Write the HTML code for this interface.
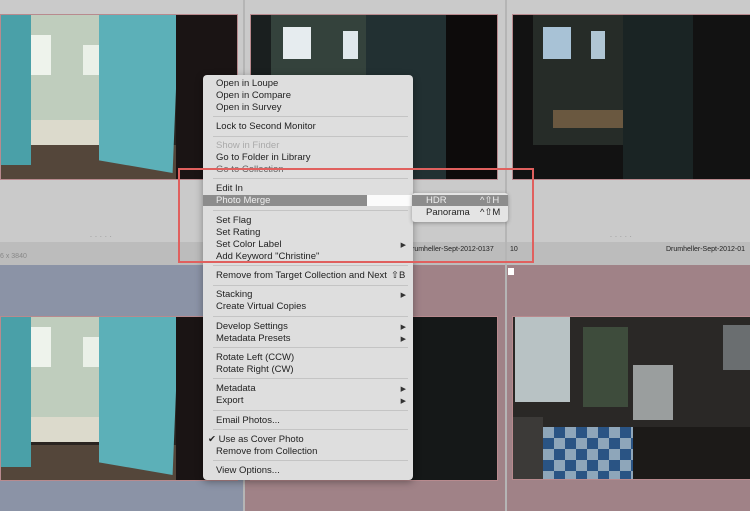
<!DOCTYPE html><html><head><style>
*{margin:0;padding:0;box-sizing:border-box}
body{width:750px;height:511px;overflow:hidden;position:relative;background:#cacaca;font-family:"Liberation Sans",sans-serif}
.a{position:absolute}
.img{position:absolute;overflow:hidden;border:1px solid #b88a8e}
.mi{position:absolute;left:13px;font-size:9.5px;color:#222;line-height:12px;white-space:nowrap}
.sep{position:absolute;left:10px;width:195px;height:1px;background:#c4c4c4}
.arr{position:absolute;right:7px;font-size:7px;color:#333}
</style></head><body>
<div class="a" style="left:243px;top:0;width:2px;height:511px;background:#b5b5b5"></div>
<div class="a" style="left:505px;top:0;width:2px;height:511px;background:#b5b5b5"></div>
<div class="a" style="left:0;top:242px;width:243px;height:23px;background:#bcbcbc"></div>
<div class="a" style="left:245px;top:242px;width:260px;height:23px;background:#bcbcbc"></div>
<div class="a" style="left:507px;top:242px;width:243px;height:23px;background:#bcbcbc"></div>
<div class="a" style="left:0;top:253px;font-size:7px;color:#888">6 x 3840</div>
<div class="a" style="left:412px;top:246px;font-size:7px;color:#222">rumheller-Sept-2012-0137</div>
<div class="a" style="left:510px;top:246px;font-size:7px;color:#222">10</div>
<div class="a" style="left:666px;top:246px;font-size:7px;color:#222">Drumheller-Sept-2012-01</div>
<div class="a" style="left:90px;top:232px;font-size:7px;color:#888;letter-spacing:3px">.....</div>
<div class="a" style="left:610px;top:232px;font-size:7px;color:#888;letter-spacing:3px">.....</div>
<div class="a" style="left:0;top:265px;width:243px;height:246px;background:#8b93a6"></div>
<div class="a" style="left:245px;top:265px;width:260px;height:246px;background:#a08287"></div>
<div class="a" style="left:507px;top:265px;width:243px;height:246px;background:#a08287"></div>
<div class="a" style="left:508px;top:268px;width:6px;height:7px;background:#fff"></div>

<div class="img" style="left:0;top:14px;width:238px;height:166px;background:#2a2420">
 <div class="a" style="left:20px;top:0;width:80px;height:110px;background:#bfcdbd"></div>
 <div class="a" style="left:22px;top:20px;width:28px;height:40px;background:#eef3ec"></div>
 <div class="a" style="left:82px;top:30px;width:16px;height:30px;background:#eaf0e8"></div>
 <div class="a" style="left:25px;top:105px;width:75px;height:25px;background:#dcdacc"></div>
 <div class="a" style="left:0;top:130px;width:238px;height:36px;background:#54463a"></div>
 <div class="a" style="left:0;top:0;width:30px;height:150px;background:#4aa0a8"></div>
 <div class="a" style="left:98px;top:0;width:80px;height:158px;background:#5cb0b8;clip-path:polygon(0 0,100% 0,92% 100%,0 92%)"></div>
 <div class="a" style="left:175px;top:0;width:63px;height:166px;background:#1a1414"></div>
</div>
<div class="img" style="left:250px;top:14px;width:248px;height:166px;background:#1a1f1f">
 <div class="a" style="left:20px;top:0;width:100px;height:140px;background:#34423c"></div>
 <div class="a" style="left:32px;top:12px;width:28px;height:32px;background:#e6ecef"></div>
 <div class="a" style="left:92px;top:16px;width:15px;height:28px;background:#e0e8ec"></div>
 <div class="a" style="left:115px;top:0;width:80px;height:166px;background:#223032"></div>
 <div class="a" style="left:195px;top:0;width:53px;height:166px;background:#0d0b0b"></div>
</div>
<div class="img" style="left:512px;top:14px;width:240px;height:166px;background:#121212">
 <div class="a" style="left:20px;top:0;width:120px;height:130px;background:#262c28"></div>
 <div class="a" style="left:30px;top:12px;width:28px;height:32px;background:#a8c2d6"></div>
 <div class="a" style="left:78px;top:16px;width:14px;height:28px;background:#b0c6d4"></div>
 <div class="a" style="left:40px;top:95px;width:70px;height:18px;background:#6a5840"></div>
 <div class="a" style="left:110px;top:0;width:70px;height:166px;background:#1a2424"></div>
</div>
<div class="img" style="left:0;top:316px;width:238px;height:165px;background:#2a2420">
 <div class="a" style="left:20px;top:0;width:80px;height:110px;background:#bfcdbd"></div>
 <div class="a" style="left:22px;top:10px;width:28px;height:40px;background:#eef3ec"></div>
 <div class="a" style="left:82px;top:20px;width:16px;height:30px;background:#eaf0e8"></div>
 <div class="a" style="left:25px;top:100px;width:75px;height:25px;background:#dcdacc"></div>
 <div class="a" style="left:0;top:128px;width:238px;height:37px;background:#54463a"></div>
 <div class="a" style="left:0;top:0;width:30px;height:150px;background:#4aa0a8"></div>
 <div class="a" style="left:98px;top:0;width:80px;height:158px;background:#5cb0b8;clip-path:polygon(0 0,100% 0,92% 100%,0 92%)"></div>
 <div class="a" style="left:175px;top:0;width:63px;height:165px;background:#1a1414"></div>
</div>
<div class="img" style="left:250px;top:316px;width:248px;height:165px;background:#151818"></div>
<div class="img" style="left:512px;top:316px;width:240px;height:164px;background:#2a2826">
 <div class="a" style="left:2px;top:0;width:55px;height:85px;background:#b8c2c4"></div>
 <div class="a" style="left:70px;top:10px;width:45px;height:80px;background:#3e4c3c"></div>
 <div class="a" style="left:120px;top:48px;width:40px;height:55px;background:#9a9e9e"></div>
 <div class="a" style="left:30px;top:110px;width:95px;height:55px;background:repeating-conic-gradient(#2a5484 0 25%,#8ea6ba 0 50%) 0 0/22px 22px"></div>
 <div class="a" style="left:0;top:100px;width:30px;height:64px;background:#3c3a38"></div>
 <div class="a" style="left:120px;top:110px;width:120px;height:54px;background:#1c1a18"></div>
 <div class="a" style="left:210px;top:8px;width:30px;height:45px;background:#6a6e70"></div>
</div>

<div class="a" style="left:203px;top:75px;width:210px;height:405px;background:#dedede;border-radius:4px;box-shadow:0 2px 8px rgba(0,0,0,.35)">
 <div class="mi" style="top:3px">Open in Loupe</div>
 <div class="mi" style="top:15px">Open in Compare</div>
 <div class="mi" style="top:27px">Open in Survey</div>
 <div class="sep" style="top:41px"></div>
 <div class="mi" style="top:46px">Lock to Second Monitor</div>
 <div class="sep" style="top:61px"></div>
 <div class="mi" style="top:65px;color:#aaa">Show in Finder</div>
 <div class="mi" style="top:77px">Go to Folder in Library</div>
 <div class="mi" style="top:89px;color:#666">Go to Collection</div>
 <div class="sep" style="top:103px"></div>
 <div class="mi" style="top:108px">Edit In</div>
 <div class="a" style="left:0;top:120px;width:164px;height:11px;background:#8c8c8c"></div>
 <div class="a" style="left:164px;top:120px;width:46px;height:11px;background:#fbfbfb"></div>
 <div class="mi" style="top:120px;color:#eee">Photo Merge</div>
 <div class="sep" style="top:135px"></div>
 <div class="mi" style="top:140px">Set Flag</div>
 <div class="mi" style="top:152px">Set Rating</div>
 <div class="mi" style="top:164px">Set Color Label</div><div class="arr" style="top:166px">▶</div>
 <div class="mi" style="top:176px">Add Keyword "Christine"</div>
 <div class="sep" style="top:190px"></div>
 <div class="mi" style="top:195px">Remove from Target Collection and Next</div><div class="mi" style="top:195px;left:188px">⇧B</div>
 <div class="sep" style="top:210px"></div>
 <div class="mi" style="top:214px">Stacking</div><div class="arr" style="top:216px">▶</div>
 <div class="mi" style="top:226px">Create Virtual Copies</div>
 <div class="sep" style="top:241px"></div>
 <div class="mi" style="top:246px">Develop Settings</div><div class="arr" style="top:248px">▶</div>
 <div class="mi" style="top:258px">Metadata Presets</div><div class="arr" style="top:260px">▶</div>
 <div class="sep" style="top:272px"></div>
 <div class="mi" style="top:277px">Rotate Left (CCW)</div>
 <div class="mi" style="top:289px">Rotate Right (CW)</div>
 <div class="sep" style="top:303px"></div>
 <div class="mi" style="top:308px">Metadata</div><div class="arr" style="top:310px">▶</div>
 <div class="mi" style="top:320px">Export</div><div class="arr" style="top:322px">▶</div>
 <div class="sep" style="top:335px"></div>
 <div class="mi" style="top:340px">Email Photos...</div>
 <div class="sep" style="top:354px"></div>
 <div class="mi" style="top:359px;left:5px">✔ Use as Cover Photo</div>
 <div class="mi" style="top:371px">Remove from Collection</div>
 <div class="sep" style="top:385px"></div>
 <div class="mi" style="top:390px">View Options...</div>
</div>
<div class="a" style="left:412px;top:193px;width:96px;height:29px;background:#e4e4e4;border-radius:3px;box-shadow:0 1px 4px rgba(0,0,0,.3)">
 <div class="a" style="left:0;top:2px;width:96px;height:11px;background:#8c8c8c"></div>
 <div class="mi" style="top:2px;left:14px;color:#eee">HDR</div><div class="mi" style="top:2px;left:68px;color:#eee">^⇧H</div>
 <div class="mi" style="top:14px;left:14px">Panorama</div><div class="mi" style="top:14px;left:68px">^⇧M</div>
</div>
<div class="a" style="left:178px;top:168px;width:356px;height:95px;border:2px solid #e0605e"></div>
</body></html>
